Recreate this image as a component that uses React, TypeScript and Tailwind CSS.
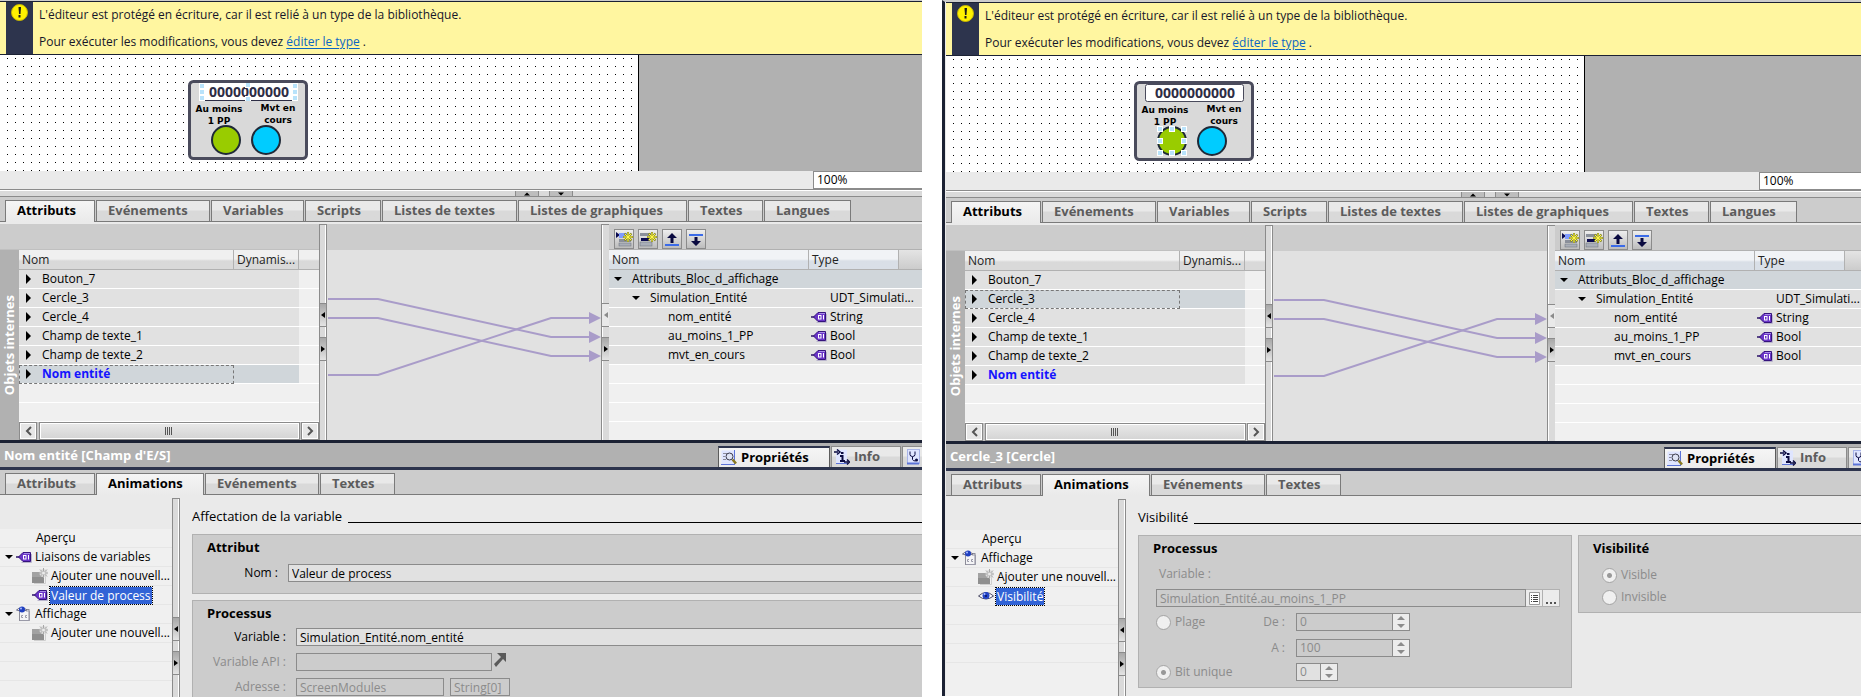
import type { ReactNode } from "react";
import clsx from "clsx";

type Tab = { label: string; width: string };
type TreeItem = { label: string; level: 0 | 1 | 2; icon?: ReactNode; selected?: boolean };

const editorTabs: Tab[] = [
  { label: "Attributs", width: "w-[90px]" },
  { label: "Evénements", width: "w-[114px]" },
  { label: "Variables", width: "w-[93px]" },
  { label: "Scripts", width: "w-[76px]" },
  { label: "Listes de textes", width: "w-[135px]" },
  { label: "Listes de graphiques", width: "w-[169px]" },
  { label: "Textes", width: "w-[75px]" },
  { label: "Langues", width: "w-[87px]" },
];

const propertyTabs: Tab[] = [
  { label: "Attributs", width: "w-[90px]" },
  { label: "Animations", width: "w-[108px]" },
  { label: "Evénements", width: "w-[114px]" },
  { label: "Textes", width: "w-[75px]" },
];

const objects = [
  "Bouton_7",
  "Cercle_3",
  "Cercle_4",
  "Champ de texte_1",
  "Champ de texte_2",
  "Nom entité",
];

const attributes = [
  { name: "nom_entité", type: "String" },
  { name: "au_moins_1_PP", type: "Bool" },
  { name: "mvt_en_cours", type: "Bool" },
];

/* ---------- icons ---------- */

const TagIcon = () => (
  <svg width="16" height="12" viewBox="0 0 16 12" className="shrink-0">
    <path d="M5.500 11.500h10V3" fill="none" stroke="#b9b4cc" />
    <path d="M0 6h4" stroke="#2b1466" strokeWidth="1.500" />
    <path d="M2.500 6 7 1.500h7.500v9H7z" fill="#6a35c8" stroke="#35137c" />
    <path d="M8 2.500h6" stroke="#a98be8" />
    <rect x="7.500" y="4.500" width="2.500" height="3.500" fill="none" stroke="#fff" />
    <path d="M12.500 4v4.500" stroke="#fff" />
  </svg>
);

const NewItemIcon = () => (
  <svg width="16" height="16" viewBox="0 0 16 16" className="shrink-0">
    <path d="M2 15.500h11.500V7" fill="none" stroke="#cfcfcf" />
    <rect x="0" y="4" width="12" height="11" fill="#8f8f8f" />
    <rect x="0" y="4" width="12" height="5" fill="#a2a2a2" />
    <circle cx="11.500" cy="5" r="4" fill="#dcdcdc" />
    <path d="M11.500 0v10M6.500 5h10M8 1.500l7 7M15 1.500l-7 7" stroke="#a8a8a8" />
    <circle cx="11.500" cy="5" r="1.500" fill="#ececec" />
  </svg>
);

const DisplayIcon = () => (
  <svg width="16" height="16" viewBox="0 0 16 16" className="shrink-0">
    <rect x="3.500" y="3.500" width="9.500" height="11" fill="#f4f4f6" stroke="#8d8d99" />
    <path d="M10 5h3.500v9.500H4" fill="none" stroke="#9a9aa8" />
    <path d="M7 9.500H5.500v2H7M11 9.500H9.500v2H11" fill="none" stroke="#9a9aa8" />
    <path d="M.5 4Q5.500-.5 11 4 5.500 7 .5 4z" fill="#fff" stroke="#6a6a80" />
    <circle cx="6" cy="3.500" r="3" fill="#1f3fc0" />
    <circle cx="5" cy="2.500" r="1" fill="#a9bcff" />
  </svg>
);

const EyeIcon = () => (
  <svg width="16" height="12" viewBox="0 0 16 12" className="shrink-0">
    <path d="M.5 6Q8-1 15.500 6 8 12 .5 6z" fill="#fff" stroke="#4b4b66" />
    <circle cx="8" cy="5.500" r="3.500" fill="#2444c8" />
    <circle cx="8" cy="6" r="1" fill="#0b1450" />
    <circle cx="6.500" cy="4" r="1" fill="#a9bcff" />
  </svg>
);

const WarningIcon = () => (
  <svg width="17" height="17" viewBox="0 0 17 17">
    <circle cx="8.500" cy="8.500" r="8" fill="#fff200" stroke="#c9b800" />
    <path d="M7.500 3h2.500l-.5 7H8z" fill="#1a1a1a" />
    <rect x="7.500" y="11" width="2" height="2.500" fill="#1a1a1a" />
  </svg>
);

const Star = () => (
  <g>
    <path d="M13 2v10M8 7h10M9.500 3.500l7 7M16.500 3.500l-7 7" stroke="#8a8a20" strokeWidth="2" />
    <path d="M13 2.500v9M8.500 7h9M10 4l6 6M16 4l-6 6" stroke="#fff84a" />
  </g>
);

const InsertRowIcon = () => (
  <svg width="18" height="18" viewBox="0 0 18 18">
    <path d="M1 2v6l4-3z" fill="#0a0a50" />
    <rect x="4" y="3" width="9" height="5" fill="#7f9bff" />
    <rect x="4" y="9" width="12" height="3" fill="#8a8f9a" />
    <rect x="4" y="13" width="12" height="3" fill="#a9aeb8" stroke="#6a6f7a" strokeWidth=".5" />
    <Star />
  </svg>
);

const AddRowIcon = () => (
  <svg width="18" height="18" viewBox="0 0 18 18">
    <rect x="1" y="3" width="11" height="3" fill="#8a8f9a" />
    <rect x="2" y="8" width="8" height="3" fill="#0a0a50" />
    <rect x="1" y="12" width="12" height="4" fill="#a9aeb8" stroke="#6a6f7a" strokeWidth=".5" />
    <Star />
  </svg>
);

const MoveUpIcon = () => (
  <svg width="18" height="18" viewBox="0 0 18 18">
    <path d="M9 3l5 5h-3.500v5h-3V8H4z" fill="#0a0a40" />
    <rect x="2" y="14" width="14" height="2" fill="#3b6be8" />
  </svg>
);

const MoveDownIcon = () => (
  <svg width="18" height="18" viewBox="0 0 18 18">
    <rect x="2" y="4" width="14" height="2" fill="#3b6be8" />
    <path d="M9 16l5-5h-3.500V7h-3v4H4z" fill="#0a0a40" />
  </svg>
);

const PropertiesIcon = () => (
  <svg width="16" height="16" viewBox="0 0 16 16" className="shrink-0">
    <rect x=".5" y=".5" width="13" height="14" fill="#dfe5ff" />
    <path d="M0 14.500h14M13.500 0v14" stroke="#5b73d8" />
    <path d="M2 3.500h4M2 6.500h2M2 9.500h3" stroke="#8b8b99" />
    <circle cx="8.500" cy="6.500" r="3.500" fill="#dfe4f5" stroke="#3a3a4a" />
    <path d="M11.500 9.500l3.500 4" stroke="#8a7a20" strokeWidth="2.500" />
  </svg>
);

const InfoIcon = () => (
  <svg width="16" height="16" viewBox="0 0 16 16" className="shrink-0">
    <rect x="2" y=".5" width="11" height="14" fill="#dfe5ff" />
    <path d="M2 14.500h11" stroke="#5b73d8" />
    <path d="M0 3h4M3 .5 6 3 3 5.500M10 13h4M13 10.500l2.500 2.500-2.500 2.500" fill="none" stroke="#0a0a40" strokeWidth="1.500" />
    <path d="M6 7h2.500v5M6 12h5" fill="none" stroke="#0a0a40" strokeWidth="2" />
    <rect x="7" y="3" width="2.500" height="2" fill="#0a0a40" />
  </svg>
);

const DiagnosticIcon = () => (
  <svg width="14" height="16" viewBox="0 0 14 16" className="shrink-0">
    <rect x=".5" y=".5" width="12" height="14" fill="#dfe5ff" stroke="#a8b4e8" />
    <path d="M0 14.500h12" stroke="#5b73d8" strokeWidth="2" />
    <path d="M3 2.500v3q0 2 2.500 2T8 5.500v-3M5.500 8v2.500q.5 1.500 3 1.500" fill="none" stroke="#0a0a40" />
    <circle cx="9.500" cy="11" r="1.500" fill="#0a0a40" />
  </svg>
);

const Triangle = ({ dir, muted }: { dir: "up" | "down" | "left" | "right"; muted?: boolean }) => {
  const shapes = {
    up: "M0 3.500 3 .5l3 3z",
    down: "M0 .5h6l-3 3z",
    left: "M4 0v6L0 3z",
    right: "M0 0v6l4-3z",
  };
  const vertical = dir === "up" || dir === "down";
  return (
    <svg width={vertical ? 6 : 4} height={vertical ? 4 : 6} className="shrink-0">
      <path d={shapes[dir]} fill={muted ? "#8b8b8b" : "#000"} />
    </svg>
  );
};

const Collapsed = () => (
  <svg width="5" height="10" className="shrink-0">
    <path d="M0 0v10l5-5z" />
  </svg>
);

const Expanded = () => (
  <svg width="8" height="4" className="shrink-0">
    <path d="M0 0h8L4 4z" />
  </svg>
);

/* ---------- shared parts ---------- */

function TabStrip({ tabs, active }: { tabs: Tab[]; active: string }) {
  return (
    <div className="flex h-[25px] items-end gap-px border-b border-[#7a7a7a] bg-[#cccccc] pl-[5px]">
      {tabs.map((tab) => (
        <button
          key={tab.label}
          className={clsx(
            "shrink-0 border border-b-0 border-[#7a7a7a] pl-[11px] text-left text-[13px] leading-[18px] font-bold whitespace-nowrap",
            tab.width,
            tab.label === active
              ? "-mb-px h-[22px] bg-linear-to-b from-[#f5f5f5] to-[#eaeaea] pb-[3px] text-black"
              : "h-[21px] bg-linear-to-b from-[#e9e9e9] from-45% to-[#d9d9d9] to-50% pb-[2px] text-[#5c5c5c]",
          )}
        >
          {tab.label}
        </button>
      ))}
    </div>
  );
}

function Splitter({ className, open, leftOff }: { className: string; open?: boolean; leftOff?: boolean }) {
  return (
    <div
      className={clsx(
        "flex w-2 shrink-0 flex-col gap-[10px] border-t border-l border-[#8b8b8b] bg-[#dadada]",
        open ? "shadow-[inset_1px_0_#fff]" : "border-r shadow-[inset_-1px_0_#fff]",
        className,
      )}
    >
      <button
        aria-label="Réduire"
        className={clsx(
          "flex h-6 items-center justify-center border-y border-[#8b8b8b]",
          leftOff ? "bg-[#e9e9e9]" : "bg-linear-to-b from-[#a8a8a8] to-[#e4e4e4]",
        )}
      >
        <Triangle dir="left" muted={leftOff} />
      </button>
      <button
        aria-label="Agrandir"
        className="flex h-6 items-center justify-center border-y border-[#8b8b8b] bg-linear-to-b from-[#a8a8a8] to-[#e4e4e4]"
      >
        <Triangle dir="right" />
      </button>
    </div>
  );
}

function Banner() {
  return (
    <div className="flex h-[54px] border-y border-[#1b2133] bg-[#fff6a0] pl-[6px] text-xs text-[#16162a]">
      <div className="flex w-[27px] justify-center bg-[#2d344d] pt-[2px]">
        <WarningIcon />
      </div>
      <div className="pl-[6px] whitespace-nowrap">
        <p className="leading-[26px]">
          L'éditeur est protégé en écriture, car il est relié à un type de la bibliothèque.
        </p>
        <p className="leading-[28px]">
          Pour exécuter les modifications, vous devez{" "}
          <a href="#type" className="text-[#0b66c3] underline underline-offset-2">
            éditer le type
          </a>{" "}
          .
        </p>
      </div>
    </div>
  );
}

const handles = [
  [25, 48], [37, 48], [49, 48],
  [25, 60], [49, 60],
  [25, 72], [37, 72], [49, 72],
];

function Faceplate({ selected }: { selected: "field" | "circle" }) {
  return (
    <svg width="120" height="80" className="absolute top-[25px] left-[188px]">
      <rect x="1.500" y="1.500" width="117" height="77" rx="4" fill="#d9d9d9" stroke="#4a4b5c" strokeWidth="3" />
      {selected === "field" ? (
        <>
          <rect x="11" y="3" width="99" height="18" fill="#fff" />
          <path d="M17 20.500h87" stroke="#2d2d45" />
        </>
      ) : (
        <rect x="11.500" y="3.500" width="98" height="17" rx="2" fill="#fff" stroke="#4a4b5c" />
      )}
      <text x="61" y="17" textAnchor="middle" className="font-['Open_Sans'] text-[14px] font-bold" fill="#2d2d45">
        0000000000
      </text>
      <g className="font-['DejaVu_Sans'] text-[9px] font-bold" textAnchor="middle">
        <text x="31" y="32">Au moins</text>
        <text x="31" y="44">1 PP</text>
        <text x="90" y="31">Mvt en</text>
        <text x="90" y="43">cours</text>
      </g>
      <circle cx="38" cy="60" r="14" fill="#99cc00" stroke="#1f2937" strokeWidth="2" />
      <circle cx="78" cy="60" r="14" fill="#00ccff" stroke="#1f2937" strokeWidth="2" />
      {selected === "field" ? (
        <>
          <path d="M14 3v18M107 3v18" stroke="#fff" strokeWidth="6" />
          <path d="M14 4v16M107 4v16" stroke="#b9e3fb" strokeWidth="4" strokeDasharray="4 2" />
          <path d="M60 3v5M60 16v5" stroke="#fff" strokeWidth="6" />
          <path d="M60 3v4M60 17v4" stroke="#b9e3fb" strokeWidth="4" />
        </>
      ) : (
        handles.map(([x, y]) => (
          <rect key={`${x}-${y}`} x={x - 1.5} y={y - 2.5} width="5" height="5" fill="#b9e3fb" stroke="#fff" />
        ))
      )}
    </svg>
  );
}

function Canvas({ selected }: { selected: "field" | "circle" }) {
  return (
    <>
      <div className="relative flex h-[116px] bg-[#b1b1b1]">
        <div className="w-[639px] border-r border-black bg-white bg-[conic-gradient(from_270deg_at_1px_1px,#000_90deg,transparent_0)] bg-[size:8px_8px] bg-[position:7px_3px]" />
        <Faceplate selected={selected} />
      </div>
      <div className="flex h-[19px] border-b border-[#8b8b8b] bg-[#eaeaea]">
        <div className="w-[813px] shrink-0" />
        <select
          aria-label="Zoom"
          className="h-[18px] flex-1 appearance-none border border-r-0 border-[#8b8b8b] bg-white pl-[3px] text-xs leading-4"
        >
          <option>100%</option>
        </select>
      </div>
      <div className="flex h-[7px] gap-[10px] border-t border-b border-t-white border-b-[#8b8b8b] bg-[#dadada] pl-[515px]">
        <button aria-label="Monter" className="flex w-6 items-center justify-center border-x border-[#8b8b8b] bg-[#bdbdbd]">
          <Triangle dir="up" />
        </button>
        <button aria-label="Descendre" className="flex w-6 items-center justify-center border-x border-[#8b8b8b] bg-[#bdbdbd]">
          <Triangle dir="down" />
        </button>
      </div>
    </>
  );
}

const th = "border-b border-[#b1b1b1] pl-[3px] text-left font-normal";

function ObjectTable({ selected }: { selected: string }) {
  return (
    <div className="flex w-[300px] flex-col bg-[#f0f0f0]">
      <table className="w-full table-fixed border-separate border-spacing-0 text-xs">
        <thead>
          <tr className="h-5 bg-linear-to-b from-[#f0f0f0] from-45% to-[#d9d9d9] to-55% text-[#222]">
            <th className={clsx(th, "w-[215px] border-r")}>Nom</th>
            <th className={clsx(th, "w-[65px] border-r")}>Dynamis...</th>
            <th className={th} />
          </tr>
        </thead>
        <tbody>
          {objects.map((name) => (
            <tr key={name} className={clsx("h-[19px]", name === selected ? "bg-[#d0d6da]" : "bg-[#e1e1e1]")}>
              <td
                className={clsx(
                  "border-b border-white",
                  name === selected && "outline-1 -outline-offset-1 outline-[#777] outline-dashed",
                )}
              >
                <div className="flex h-[18px] items-center gap-[11px] pl-[7px]">
                  <Collapsed />
                  <span className={clsx(name === "Nom entité" && "font-bold text-[#1414ff]")}>{name}</span>
                </div>
              </td>
              <td className="border-b border-white" />
              <td className="border-b border-white bg-[#f0f0f0]" />
            </tr>
          ))}
          <tr className="h-[19px]">
            <td colSpan={3} className="border-b border-white" />
          </tr>
          <tr className="h-[19px]">
            <td colSpan={3} className="border-b border-white" />
          </tr>
        </tbody>
      </table>
      <div className="mt-auto flex h-[18px] justify-between bg-[#c4c4c4]">
        <button aria-label="Défiler à gauche" className="flex w-[18px] items-center justify-center border border-[#8b8b8b] bg-[#e6e6e6] shadow-[inset_0_0_0_1px_#fff]">
          <svg width="7" height="10" fill="none" stroke="#555" strokeWidth="2">
            <path d="M6 1 2 5l4 4" />
          </svg>
        </button>
        <div className="flex w-[261px] items-center justify-center border border-[#8b8b8b] bg-linear-to-b from-[#e9e9e9] to-[#d4d4d4] shadow-[inset_0_0_0_1px_#fff]">
          <svg width="8" height="8" stroke="#555">
            <path d="M.5 0v8M2.500 0v8M4.500 0v8M6.500 0v8" />
          </svg>
        </div>
        <button aria-label="Défiler à droite" className="flex w-[18px] items-center justify-center border border-[#8b8b8b] bg-[#e6e6e6] shadow-[inset_0_0_0_1px_#fff]">
          <svg width="7" height="10" fill="none" stroke="#555" strokeWidth="2">
            <path d="M1 1l4 4-4 4" />
          </svg>
        </button>
      </div>
    </div>
  );
}

function Links() {
  return (
    <div className="w-[274px] shrink-0 bg-[#e1e1e1]">
      <div className="h-[26px] bg-[#cccccc]" />
      <svg width="274" height="190" className="block">
        <g fill="none" stroke="#a99cc9" strokeWidth="2">
          <path d="M1 49h50l173 38h40" />
          <path d="M1 68h50l173 38h40" />
          <path d="M1 125h50L224 68h40" />
        </g>
        <path d="M262 62l12 6-12 6zM262 81l12 6-12 6zM262 100l12 6-12 6z" fill="#a99cc9" />
      </svg>
    </div>
  );
}

function AttributeTable() {
  const tools = [
    { label: "Insérer", icon: <InsertRowIcon /> },
    { label: "Ajouter", icon: <AddRowIcon /> },
    { label: "Vers le haut", icon: <MoveUpIcon /> },
    { label: "Vers le bas", icon: <MoveDownIcon /> },
  ];
  const cell = "border-b border-white";
  return (
    <div className="min-w-0 flex-1 overflow-hidden bg-[#f0f0f0]">
      <div className="flex h-[26px] gap-1 border-b border-[#b1b1b1] bg-[#cccccc] pt-[5px] pl-[5px]">
        {tools.map((tool) => (
          <button
            key={tool.label}
            aria-label={tool.label}
            className="flex size-5 items-center justify-center border border-[#8b8b8b] bg-linear-to-b from-[#eeeeee] to-[#bdbdbd]"
          >
            {tool.icon}
          </button>
        ))}
      </div>
      <table className="w-full min-w-[313px] table-fixed border-separate border-spacing-0 text-xs">
        <thead>
          <tr className="h-5 bg-linear-to-b from-[#f1f3f6] from-45% to-[#d9dfe7] to-55% text-[#222]">
            <th className={clsx(th, "w-[200px] border-r")}>Nom</th>
            <th className={clsx(th, "w-[90px] border-r")}>Type</th>
            <th className={clsx(th, "bg-linear-to-b from-[#e4e4e4] to-[#cccccc]")} />
          </tr>
        </thead>
        <tbody>
          <tr className="h-[19px] bg-[#d0d6da]">
            <td className={cell}>
              <div className="flex h-[18px] items-center gap-[10px] pl-[5px]">
                <Expanded /> Attributs_Bloc_d_affichage
              </div>
            </td>
            <td colSpan={2} className={cell} />
          </tr>
          <tr className="h-[19px] bg-[#e1e1e1]">
            <td className={cell}>
              <div className="flex h-[18px] items-center gap-[10px] pl-[23px]">
                <Expanded /> Simulation_Entité
              </div>
            </td>
            <td colSpan={2} className={clsx(cell, "pl-[21px]")}>
              UDT_Simulati...
            </td>
          </tr>
          {attributes.map((attr) => (
            <tr key={attr.name} className="h-[19px] bg-[#e1e1e1]">
              <td className={clsx(cell, "pl-[59px]")}>{attr.name}</td>
              <td colSpan={2} className={cell}>
                <div className="flex h-[18px] items-center gap-[3px] pl-[2px]">
                  <TagIcon /> {attr.type}
                </div>
              </td>
            </tr>
          ))}
          {[0, 1, 2].map((i) => (
            <tr key={i} className="h-[19px]">
              <td colSpan={3} className={cell} />
            </tr>
          ))}
        </tbody>
      </table>
    </div>
  );
}

function InterfaceEditor({ selected }: { selected: string }) {
  return (
    <div className="mt-[2px] flex h-[216px] bg-[#cccccc]">
      <div className="flex shrink-0 flex-col">
        <div className="h-[26px] border-b border-[#c0c0c0]" />
        <div className="flex flex-1">
          <div className="flex w-[19px] items-center bg-[#b1b1b1]">
            <span className="rotate-180 text-[13px] leading-[18px] font-bold whitespace-nowrap text-white [writing-mode:vertical-rl]">
              Objets internes
            </span>
          </div>
          <ObjectTable selected={selected} />
        </div>
      </div>
      <Splitter className="pt-[78px]" />
      <Links />
      <Splitter className="pt-[78px]" open leftOff />
      <AttributeTable />
    </div>
  );
}

function InspectorHeader({ title }: { title: string }) {
  const idle = "flex h-[21px] shrink-0 items-center border border-b-0 border-[#8b8b8b] bg-linear-to-b from-[#e9e9e9] from-45% to-[#d9d9d9] to-50% text-[#5c5c5c]";
  return (
    <div className="flex h-[30px] items-end overflow-hidden border-t-[3px] border-b-[3px] border-t-[#1b2133] border-b-[#2d344d] bg-[#b1b1b1] text-[13px] font-bold">
      <h2 className="w-[718px] shrink-0 self-center pl-[4px] leading-5 text-white">{title}</h2>
      <div className="flex items-start self-end gap-px">
        <button className="-mb-[3px] flex h-6 w-[112px] shrink-0 items-center gap-[4px] border-x border-t-2 border-x-[#5c5c5c] border-t-[#2d344d] bg-linear-to-b from-[#f5f5f5] to-[#eaeaea] pb-[2px] pl-[2px] text-black">
          <PropertiesIcon /> Propriétés
        </button>
        <button className={clsx(idle, "w-[70px] gap-[4px] pl-[2px]")}>
          <InfoIcon /> Info
        </button>
        <button aria-label="Diagnostic" className={clsx(idle, "w-[70px] pl-[4px]")}>
          <DiagnosticIcon />
        </button>
      </div>
    </div>
  );
}

function Tree({ items }: { items: TreeItem[] }) {
  return (
    <div className="flex w-[172px] shrink-0 flex-col">
      <div className="h-[34px]" />
      <ul className="flex-1 bg-[#f0f0f0] text-xs">
        {items.map((item, i) => (
          <li
            key={i}
            className={clsx(
              "flex h-[19px] items-center gap-[3px] border-b border-[#e6e6e6] whitespace-nowrap",
              item.level === 0 && "pl-9",
              item.level === 1 && "pl-[5px]",
              item.level === 2 && "pl-8",
            )}
          >
            {item.level === 1 && <Expanded />}
            {item.icon}
            {item.selected ? (
              <span className="-ml-px bg-[#3163d6] px-px leading-[17px] text-white outline-1 outline-black outline-dotted">
                {item.label}
              </span>
            ) : (
              <span>{item.label}</span>
            )}
          </li>
        ))}
        {[0, 1, 2].map((i) => (
          <li key={i} className="h-[19px] border-b border-[#e6e6e6]" />
        ))}
      </ul>
    </div>
  );
}

function SectionTitle({ children }: { children: ReactNode }) {
  return (
    <div className="flex items-end gap-[6px] pt-[11px] pb-2">
      <h3 className="text-[13px] leading-5 whitespace-nowrap">{children}</h3>
      <div className="mb-[3px] h-px flex-1 bg-black" />
    </div>
  );
}

function GroupTitle({ children }: { children: ReactNode }) {
  return <h4 className="pl-[14px] text-[13px] leading-5 font-bold">{children}</h4>;
}

const group = "border border-[#b1b1b1] bg-[#cccccc] pt-[2px] text-xs";
const field = "h-[18px] border border-[#8b8b8b] pl-[3px] text-xs leading-4 whitespace-nowrap";
const offField = "bg-transparent text-[#8b8b8b]";

function VariableForm() {
  return (
    <div className="flex min-w-0 flex-1 flex-col overflow-hidden pl-3">
      <SectionTitle>Affectation de la variable</SectionTitle>
      <section className={clsx(group, "border-r-0 pb-[11px]")}>
        <GroupTitle>Attribut</GroupTitle>
        <div className="mt-[7px] flex items-center gap-[10px]">
          <label htmlFor="anim-name" className="w-[85px] text-right">
            Nom :
          </label>
          <input id="anim-name" defaultValue="Valeur de process" className={clsx(field, "flex-1 border-r-0 bg-[#e1e1e1]")} />
        </div>
      </section>
      <section className={clsx(group, "mt-[6px] flex-1 border-r-0 border-b-0")}>
        <GroupTitle>Processus</GroupTitle>
        <div className="mt-[5px] flex flex-col gap-[7px]">
          <div className="flex items-center gap-[10px]">
            <label htmlFor="proc-variable" className="w-[93px] text-right">
              Variable :
            </label>
            <input id="proc-variable" defaultValue="Simulation_Entité.nom_entité" className={clsx(field, "flex-1 border-r-0 bg-[#e1e1e1]")} />
          </div>
          <div className="flex items-center gap-[10px] text-[#8b8b8b]">
            <label htmlFor="proc-plc" className="w-[93px] text-right whitespace-nowrap">
              Variable API :
            </label>
            <div className="flex gap-[2px]">
              <input id="proc-plc" disabled className={clsx(field, offField, "w-[196px]")} />
              <svg width="12" height="14">
                <path d="M3 0h9v9l-3-3-7 8-2-3 7-7z" fill="#5a5a5a" />
              </svg>
            </div>
          </div>
          <div className="flex items-center gap-[10px] text-[#8b8b8b]">
            <label htmlFor="proc-address" className="w-[93px] text-right">
              Adresse :
            </label>
            <div className="flex gap-[6px]">
              <input id="proc-address" disabled defaultValue="ScreenModules" className={clsx(field, offField, "w-[148px]")} />
              <input aria-label="Type de données" disabled defaultValue="String[0]" className={clsx(field, offField, "w-[60px]")} />
            </div>
          </div>
        </div>
      </section>
    </div>
  );
}

function Spinner({ id, label, value, width, light }: { id: string; label?: string; value: string; width: string; light?: boolean }) {
  return (
    <div className={clsx("flex h-[18px] border border-[#8b8b8b]", light && "bg-[#e1e1e1]", width)}>
      <input id={id} aria-label={label} disabled defaultValue={value} className="min-w-0 flex-1 pl-[3px] leading-4 text-[#8b8b8b]" />
      <div className="flex w-[17px] flex-col border-l border-[#8b8b8b] bg-[#ececec]">
        <button disabled aria-label="Augmenter" className="flex h-2 items-center justify-center">
          <svg width="8" height="4">
            <path d="M4 0l4 4H0z" fill="#8b8b8b" />
          </svg>
        </button>
        <button disabled aria-label="Diminuer" className="flex h-2 items-center justify-center">
          <svg width="8" height="4">
            <path d="M0 0h8L4 4z" fill="#8b8b8b" />
          </svg>
        </button>
      </div>
    </div>
  );
}

function Radio({ name, label, checked }: { name: string; label: string; checked?: boolean }) {
  return (
    <label className="flex items-center gap-[4px]">
      <input
        type="radio"
        name={name}
        disabled
        defaultChecked={checked}
        className="size-[15px] appearance-none rounded-full border border-[#a3a3a3] bg-[#f0f0f0] checked:bg-[radial-gradient(circle,#999_2px,#f0f0f0_3px)]"
      />
      {label}
    </label>
  );
}

function VisibilityForm() {
  return (
    <div className="min-w-0 flex-1 overflow-hidden pl-3">
      <SectionTitle>Visibilité</SectionTitle>
      <div className="flex items-start gap-[6px] pb-[6px] text-[#8b8b8b]">
        <section className={clsx(group, "w-[434px] shrink-0 pb-[6px]")}>
          <div className="text-black">
            <GroupTitle>Processus</GroupTitle>
          </div>
          <div className="pl-[17px]">
            <label htmlFor="vis-variable" className="mt-[7px] block pl-[3px] leading-[18px]">
              Variable :
            </label>
            <div className="mt-[6px] flex">
              <input id="vis-variable" disabled defaultValue="Simulation_Entité.au_moins_1_PP" className={clsx(field, offField, "w-[370px]")} />
              <button disabled aria-label="Liste des variables" className="flex w-[17px] items-center justify-center border border-l-0 border-[#b1b1b1] bg-[#ececec]">
                <svg width="11" height="13">
                  <path d="M.5.5h10v12H.5z" fill="#fff" stroke="#9a9a9a" />
                  <path d="M2 3.500h1M4 3.500h5M2 5.500h1M4 5.500h5M2 7.500h1M4 7.500h5M2 9.500h1M4 9.500h5" stroke="#444" />
                </svg>
              </button>
              <button disabled aria-label="Parcourir" className="flex w-[17px] items-end justify-center border border-l-0 border-[#b1b1b1] bg-[#ececec] pb-[2px]">
                <svg width="10" height="2" fill="#555">
                  <path d="M0 0h2v2H0zM4 0h2v2H4zM8 0h2v2H8z" />
                </svg>
              </button>
            </div>
            <div className="mt-[6px] flex items-center">
              <div className="w-[88px]">
                <Radio name="mode" label="Plage" />
              </div>
              <label htmlFor="range-from" className="w-[42px] pr-[1px] text-right">
                De :
              </label>
              <div className="pl-[10px]">
                <Spinner id="range-from" value="0" width="w-[114px]" />
              </div>
            </div>
            <div className="mt-[8px] flex items-center">
              <label htmlFor="range-to" className="w-[130px] pr-[1px] text-right">
                A :
              </label>
              <div className="pl-[10px]">
                <Spinner id="range-to" value="100" width="w-[114px]" />
              </div>
            </div>
            <div className="mt-[6px] flex items-center">
              <div className="w-[140px]">
                <Radio name="mode" label="Bit unique" checked />
              </div>
              <Spinner id="bit-number" label="Numéro de bit" value="0" width="w-[42px]" light />
            </div>
          </div>
        </section>
        <section className={clsx(group, "flex-1 border-r-0 pb-[6px]")}>
          <div className="text-black">
            <GroupTitle>Visibilité</GroupTitle>
          </div>
          <div className="mt-[8px] flex flex-col gap-[4px] pl-[23px] leading-[18px]">
            <Radio name="visibility" label="Visible" checked />
            <Radio name="visibility" label="Invisible" />
          </div>
        </section>
      </div>
    </div>
  );
}

type PaneProps = {
  title: string;
  selected: string;
  canvas: "field" | "circle";
  tree: TreeItem[];
  className: string;
  children: ReactNode;
};

function Pane({ title, selected, canvas, tree, className, children }: PaneProps) {
  return (
    <section className={clsx("flex min-w-0 flex-col overflow-hidden bg-[#eaeaea]", className)}>
      <Banner />
      <Canvas selected={canvas} />
      <TabStrip tabs={editorTabs} active="Attributs" />
      <InterfaceEditor selected={selected} />
      <InspectorHeader title={title} />
      <TabStrip tabs={propertyTabs} active="Animations" />
      <div className="flex flex-1">
        <Tree items={tree} />
        <Splitter className="mt-[3px] pt-[118px]" />
        {children}
      </div>
    </section>
  );
}

const fieldTree: TreeItem[] = [
  { label: "Aperçu", level: 0 },
  { label: "Liaisons de variables", level: 1, icon: <TagIcon /> },
  { label: "Ajouter une nouvell...", level: 2, icon: <NewItemIcon /> },
  { label: "Valeur de process", level: 2, icon: <TagIcon />, selected: true },
  { label: "Affichage", level: 1, icon: <DisplayIcon /> },
  { label: "Ajouter une nouvell...", level: 2, icon: <NewItemIcon /> },
];

const circleTree: TreeItem[] = [
  { label: "Aperçu", level: 0 },
  { label: "Affichage", level: 1, icon: <DisplayIcon /> },
  { label: "Ajouter une nouvell...", level: 2, icon: <NewItemIcon /> },
  { label: "Visibilité", level: 2, icon: <EyeIcon />, selected: true },
];

export default function App() {
  return (
    <main className="grid min-h-screen grid-cols-[922fr_919fr] gap-x-5 bg-white font-['Open_Sans',sans-serif] text-black">
      <Pane
        title="Nom entité [Champ d'E/S]"
        selected="Nom entité"
        canvas="field"
        tree={fieldTree}
        className="border-t border-[#cccccc]"
      >
        <VariableForm />
      </Pane>
      <Pane
        title="Cercle_3 [Cercle]"
        selected="Cercle_3"
        canvas="circle"
        tree={circleTree}
        className="mb-1 border-t-2 border-l-[3px] border-t-[#cccccc] border-l-[#1b2133] pl-px"
      >
        <VisibilityForm />
      </Pane>
    </main>
  );
}
